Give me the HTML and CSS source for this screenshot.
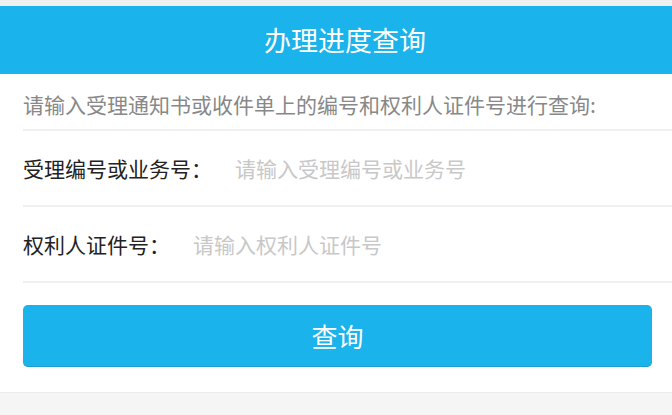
FILE: index.html
```html
<!DOCTYPE html>
<html>
  <head>
    <meta charset="utf-8">
    <title>办理进度查询</title>
    <link rel="stylesheet" href="styles.css">
  </head>
  <body>
    <div class="page">
      <h1 class="title-bar">办理进度查询</h1>
      <div class="panel">
        <p class="tip">请输入受理通知书或收件单上的编号和权利人证件号进行查询:</p>
        <div class="form-row">
          <label for="slbh">受理编号或业务号：</label>
          <input type="text" id="slbh" name="slbh" placeholder="请输入受理编号或业务号" />
        </div>
        <div class="form-row">
          <label for="zjh">权利人证件号：</label>
          <input type="text" id="zjh" name="zjh" placeholder="请输入权利人证件号" />
        </div>
        <div class="btn-area">
          <button type="submit" class="btn-query">查询</button>
        </div>
      </div>
    </div>
  </body>
</html>
```

FILE: styles.css
```css
/* 办理进度查询 */
* {
  box-sizing: border-box;
}
body {
  font-family: "Noto Sans CJK SC", "Liberation Sans", sans-serif;
  margin: 0;
  padding: 0;
  background-color: #f5f5f5;
}
.page {
  padding-top: 6px;
  background-color: #efefef;
}
.title-bar {
  margin: 0;
  padding-left: 18px;
  height: 68px;
  line-height: 68px;
  text-align: center;
  font-size: 27px;
  font-weight: normal;
  color: #fff;
  background-color: #1ab3eb;
}
.panel {
  padding-left: 23px;
  background-color: #fff;
  border-bottom: 1px solid #ececec;
}
.tip {
  margin: 0;
  padding: 16px 0 11px;
  line-height: 28px;
  font-size: 21px;
  color: #888;
  border-bottom: 2px solid #f0f0f0;
}
.form-row {
  display: flex;
  align-items: center;
  height: 76px;
  border-bottom: 2px solid #f0f0f0;
  font-size: 21px;
}
.form-row label {
  color: #222;
}
.form-row input {
  flex: 1;
  margin-left: 23px;
  padding: 0;
  border: none;
  outline: none;
  font-family: inherit;
  font-size: 21px;
  color: #333;
}
.form-row input::placeholder {
  color: #c8c8c8;
}
.btn-area {
  padding: 22px 20px 25px 0;
}
.btn-query {
  display: block;
  width: 100%;
  height: 62px;
  font-family: inherit;
  font-size: 26px;
  color: #fff;
  background-color: #1ab3eb;
  border: none;
  border-bottom: 1px solid #1a9fd4;
  border-radius: 5px;
  cursor: pointer;
}
```
